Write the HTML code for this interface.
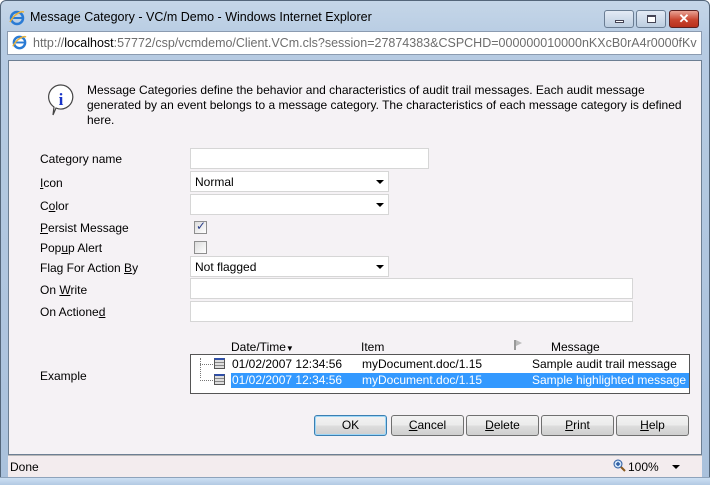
<!DOCTYPE html>
<html><head><meta charset="utf-8"><style>
*{margin:0;padding:0;box-sizing:border-box}
body{width:710px;height:485px;overflow:hidden;background:#fff;font-family:"Liberation Sans",sans-serif;font-size:12px;color:#000;position:relative}
.a{position:absolute}
#frame{left:0;top:0;width:710px;height:485px;background:linear-gradient(#c5d6e8,#b6cbe2 40px,#aac1dc);border:1px solid #54667a;border-radius:6px 6px 0 0}
#content{left:8px;top:60px;width:694px;height:395px;background:#f5f2f5;border:1px solid #6d7f93}
#status{left:8px;top:455px;width:694px;height:22px;background:#f3ecee;border-top:1px solid #b8b8b8}
input.t{position:absolute;height:21px;border:1px solid #d6d6d6;background:#fff}
.sel{position:absolute;height:21px;border:1px solid #d6d6d6;background:#fff;padding:3px 4px;font-size:12px}
.sel:after{content:"";position:absolute;right:4px;top:8px;border-left:4px solid transparent;border-right:4px solid transparent;border-top:4px solid #000}
.lbl{position:absolute;left:40px;font-size:12px}
u{text-decoration:underline}
.btn{position:absolute;top:415px;width:73px;height:21px;border:1px solid #707070;border-radius:3px;background:linear-gradient(#f2f2f2,#ebebeb 50%,#dddddd 51%,#cfcfcf);text-align:center;line-height:19px;font-size:12px}
.cb{position:absolute;left:194px;width:13px;height:13px;border:1px solid #8f8f8f;background:linear-gradient(135deg,#dcdcdc,#fff)}
</style></head><body>
<div class="a" id="frame"></div>
<svg class="a" style="left:8px;top:9px" width="18" height="18" viewBox="0 0 18 18"><ellipse cx="9" cy="9" rx="6" ry="6" fill="none" stroke="#2a7bd4" stroke-width="2.5"/><path d="M4 9h10" stroke="#2a7bd4" stroke-width="2"/><path d="M2 13C6 5 13 2 16 3" stroke="#e8b13a" stroke-width="1.5" fill="none"/></svg>
<div class="a" style="left:30px;top:10px;font-size:12.5px">Message Category - VC/m Demo - Windows Internet Explorer</div>
<div class="a" style="left:604px;top:10px;width:30px;height:18px;border:1px solid #6a7d93;border-radius:3px;background:linear-gradient(#e3ebf5,#bccde0)"><div class="a" style="left:10px;top:9px;width:9px;height:3px;background:#fff;border:1px solid #445"></div></div>
<div class="a" style="left:636px;top:10px;width:30px;height:18px;border:1px solid #6a7d93;border-radius:3px;background:linear-gradient(#e3ebf5,#bccde0)"><div class="a" style="left:10px;top:4px;width:9px;height:8px;border:1px solid #445;border-top-width:2px;background:#fff"></div></div>
<div class="a" style="left:669px;top:10px;width:30px;height:18px;border:1px solid #5a2020;border-radius:3px;background:linear-gradient(#e9a395,#c9452f 55%,#b8301c);color:#fff;font-weight:bold;text-align:center;line-height:16px;font-size:13px">✕</div>
<div class="a" style="left:7px;top:31px;width:695px;height:24px;background:#fff;border:1px solid #8b9bb0"></div>
<svg class="a" style="left:11px;top:34px" width="17" height="17" viewBox="0 0 18 18"><ellipse cx="9" cy="9" rx="6" ry="6" fill="none" stroke="#2a7bd4" stroke-width="2.5"/><path d="M4 9h10" stroke="#2a7bd4" stroke-width="2"/><path d="M2 13C6 5 13 2 16 3" stroke="#e8b13a" stroke-width="1.5" fill="none"/></svg>
<div class="a" style="left:33px;top:36px;width:664px;overflow:hidden;white-space:nowrap;color:#6d6d6d;font-size:12.5px">http://<span style="color:#000">localhost</span>:57772/csp/vcmdemo/Client.VCm.cls?session=27874383&amp;CSPCHD=000000010000nKXcB0rA4r0000fKvoTKbB4z</div>
<div class="a" id="content"></div>
<svg class="a" style="left:46px;top:83px" width="30" height="34" viewBox="0 0 30 34"><path d="M15 2a12 12 0 1 1-5 23l-3 7 1-8A12 12 0 0 1 15 2z" fill="#fff" stroke="#444" stroke-width="1.2"/><text x="15" y="22" font-family="Liberation Serif" font-weight="bold" font-size="17" fill="#1a35c8" text-anchor="middle">i</text></svg>
<div class="a" style="left:87px;top:83px;width:606px;font-size:12px;line-height:15px">Message Categories define the behavior and characteristics of audit trail messages. Each audit message generated by an event belongs to a message category. The characteristics of each message category is defined here.</div>
<div class="lbl" style="top:152px">Category name</div>
<input class="t" style="left:190px;top:148px;width:239px">
<div class="lbl" style="top:176px"><u>I</u>con</div>
<div class="sel" style="left:190px;top:171px;width:199px">Normal</div>
<div class="lbl" style="top:199px">C<u>o</u>lor</div>
<div class="sel" style="left:190px;top:194px;width:199px"></div>
<div class="lbl" style="top:221px"><u>P</u>ersist Message</div>
<div class="cb" style="top:221px"><span class="a" style="left:1px;top:-3px;color:#2b3e8a;font-size:12px">✓</span></div>
<div class="lbl" style="top:241px">Pop<u>u</u>p Alert</div>
<div class="cb" style="top:241px"></div>
<div class="lbl" style="top:261px">Flag For Action <u>B</u>y</div>
<div class="sel" style="left:190px;top:256px;width:199px">Not flagged</div>
<div class="lbl" style="top:283px">On <u>W</u>rite</div>
<input class="t" style="left:190px;top:278px;width:443px">
<div class="lbl" style="top:305px">On Actione<u>d</u></div>
<input class="t" style="left:190px;top:301px;width:443px">
<div class="lbl" style="top:369px">Example</div>
<div class="a" style="left:231px;top:340px">Date/Time<span style="font-size:8px">▼</span></div>
<div class="a" style="left:361px;top:340px">Item</div>
<div class="a" style="left:514px;top:340px;width:2px;height:10px;background:#999"></div><div class="a" style="left:516px;top:340px;border-left:6px solid #bbb;border-top:3px solid transparent;border-bottom:3px solid transparent"></div>
<div class="a" style="left:551px;top:340px">Message</div>
<div class="a" style="left:190px;top:354px;width:500px;height:40px;background:#fff;border:1px solid #555"></div>
<div class="a" style="left:200px;top:358px;height:20px;border-left:1px dotted #777"></div>
<div class="a" style="left:200px;top:364px;width:13px;border-top:1px dotted #777"></div>
<div class="a" style="left:200px;top:380px;width:13px;border-top:1px dotted #777"></div>
<div class="a" style="left:231px;top:373px;width:458px;height:15px;background:#3399ff"></div>
<div class="a" style="left:214px;top:358px;width:11px;height:11px;border:1px solid #555;background:repeating-linear-gradient(#ddd 0 2px,#888 2px 3px);border-top:2px solid #2f4fa8"></div>
<div class="a" style="left:214px;top:374px;width:11px;height:11px;border:1px solid #555;background:repeating-linear-gradient(#ddd 0 2px,#888 2px 3px);border-top:2px solid #2f4fa8"></div>
<div class="a" style="left:232px;top:357px">01/02/2007 12:34:56</div>
<div class="a" style="left:362px;top:357px">myDocument.doc/1.15</div>
<div class="a" style="left:532px;top:357px">Sample audit trail message</div>
<div class="a" style="left:232px;top:373px;color:#fff">01/02/2007 12:34:56</div>
<div class="a" style="left:362px;top:373px;color:#fff">myDocument.doc/1.15</div>
<div class="a" style="left:532px;top:373px;color:#fff">Sample highlighted message</div>
<div class="btn" style="left:314px;border-color:#3c7fb1;box-shadow:inset 0 0 0 1px #9ed7f7">OK</div>
<div class="btn" style="left:391px"><u>C</u>ancel</div>
<div class="btn" style="left:466px"><u>D</u>elete</div>
<div class="btn" style="left:541px"><u>P</u>rint</div>
<div class="btn" style="left:616px"><u>H</u>elp</div>
<div class="a" id="status"></div>
<div class="a" style="left:10px;top:460px">Done</div>
<svg class="a" style="left:613px;top:459px" width="13" height="13" viewBox="0 0 13 13"><circle cx="5" cy="5" r="4" fill="#cfe3f7" stroke="#2a5aa0"/><path d="M3 5h4M5 3v4" stroke="#2a5aa0" stroke-width="1.5"/><path d="M8 8l4 4" stroke="#8a5a20" stroke-width="2"/></svg>
<div class="a" style="left:628px;top:460px">100%</div>
<div class="a" style="left:672px;top:465px;border-left:4px solid transparent;border-right:4px solid transparent;border-top:4px solid #000"></div>
<div class="a" style="left:0;top:477px;width:710px;height:8px;background:linear-gradient(#cde0f3,#b2c9e3);border-top:1px solid #8ea3bb"></div>
</body></html>
